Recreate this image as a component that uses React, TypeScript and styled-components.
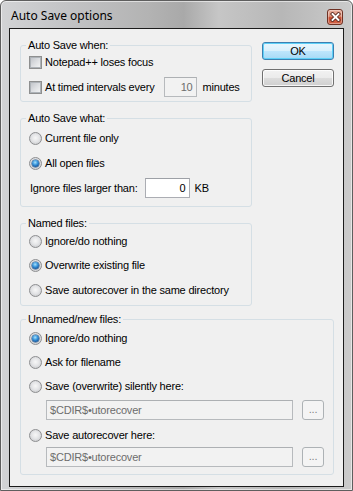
import React from "react";
import styled, { createGlobalStyle } from "styled-components";

const Global = createGlobalStyle`
  html, body { margin: 0; padding: 0; background: #ffffff; }
  body { width: 353px; height: 491px; overflow: hidden; }
  * { box-sizing: border-box; }
`;

const Window = styled.div`
  width: 353px;
  height: 491px;
  display: flex;
  flex-direction: column;
  border: 1px solid #5e5e5e;
  border-radius: 6px 6px 0 0;
  box-shadow: inset 0 0 0 1px rgba(255, 255, 255, 0.55);
  background: linear-gradient(90deg, #d2d3d5 0%, #c3c4c6 18%, #b3b3b3 42%, #a9a9a9 52%, #c6c6c6 62%, #b7b7b7 80%, #cbcbcb 100%);
  padding: 0 8px 3px 8px;
`;

const TitleBar = styled.div`
  height: 27px;
  flex: none;
  display: flex;
  align-items: flex-start;
  justify-content: space-between;
`;

const Title = styled.div`
  font-family: "Noto Sans", "Open Sans", sans-serif;
  font-size: 12px;
  line-height: 16px;
  color: #000000;
  margin: 7px 0 0 2px;
`;

const CloseButton = styled.div`
  width: 16px;
  height: 16px;
  margin: 8px 1px 0 0;
  border: 1px solid #6f3124;
  border-radius: 3px;
  background: linear-gradient(180deg, #eab2a2 0%, #d98c74 45%, #c8482c 55%, #d2664a 100%);
  box-shadow: inset 0 0 0 1px rgba(255, 255, 255, 0.35);
  display: flex;
  align-items: center;
  justify-content: center;
`;

const Client = styled.div`
  flex: 1;
  display: flex;
  flex-direction: column;
  border: 1px solid #1b1b1b;
  background: #f0f0f0;
  padding: 10px 9px 0 10px;
  font-family: "Liberation Sans", Arial, sans-serif;
  font-size: 11px;
  letter-spacing: -0.2px;
  color: #000000;
`;

const TopArea = styled.div`
  display: grid;
  grid-template-columns: 232px 1fr;
  column-gap: 9px;
`;

const GroupColumn = styled.div`
  display: flex;
  flex-direction: column;
  gap: 10px;
`;

const ButtonColumn = styled.div`
  display: flex;
  flex-direction: column;
  align-items: flex-end;
  gap: 9px;
  padding-top: 3px;
`;

const Group = styled.fieldset`
  margin: 0;
  padding: 0;
  min-width: 0;
  border: 1px solid #d5dfe5;
  border-radius: 3px;
`;

const Legend = styled.legend`
  margin-left: 5px;
  padding: 0 2px;
  line-height: 13px;
  font-size: 11px;
`;

const GroupBody = styled.div<{ $bottom: number }>`
  display: flex;
  flex-direction: column;
  padding: 0 8px ${(p) => p.$bottom}px 8px;
`;

const Row = styled.div<{ $mt: number; $indent?: number }>`
  display: flex;
  align-items: center;
  height: 20px;
  margin-top: ${(p) => p.$mt}px;
  margin-left: ${(p) => p.$indent ?? 0}px;
  white-space: nowrap;
`;

const Label = styled.span`
  margin-left: 3px;
  line-height: 13px;
`;

const PlainLabel = styled.span<{ $ml?: number }>`
  margin-left: ${(p) => p.$ml ?? 0}px;
  line-height: 13px;
`;

const CheckBox = styled.span`
  width: 13px;
  height: 13px;
  flex: none;
  border: 1px solid #8e8f8f;
  background: #f4f4f4;
  display: flex;
  align-items: center;
  justify-content: center;
  &::after {
    content: "";
    width: 9px;
    height: 9px;
    border: 1px solid #aeb3b8;
    background: linear-gradient(135deg, #c3c6cb 0%, #dcdee1 50%, #f1f2f3 100%);
  }
`;

const RadioMark = styled.span<{ $checked?: boolean }>`
  width: 13px;
  height: 13px;
  flex: none;
  border-radius: 50%;
  border: 1px solid #8d8e90;
  background: radial-gradient(circle at 50% 45%, #f7f7f7 0%, #e4e5e7 45%, #cdced1 80%, #f2f2f2 100%);
  display: flex;
  align-items: center;
  justify-content: center;
  &::after {
    content: "";
    display: ${(p) => (p.$checked ? "block" : "none")};
    width: 7px;
    height: 7px;
    border-radius: 50%;
    background: radial-gradient(circle at 45% 35%, #a9e2fb 0%, #3b97dc 40%, #1a5fa6 70%, #0f3f7a 100%);
    box-shadow: 0 0 0 0.5px #234f7e;
  }
`;

const TextBox = styled.div<{ $width: number; $disabled?: boolean; $ml?: number; $align?: string }>`
  width: ${(p) => p.$width}px;
  height: 20px;
  margin-left: ${(p) => p.$ml ?? 0}px;
  border: 1px solid ${(p) => (p.$disabled ? "#b7babd" : "#abadb3")};
  border-top-color: ${(p) => (p.$disabled ? "#adb0b3" : "#9da0a6")};
  background: ${(p) => (p.$disabled ? "#f2f2f2" : "#ffffff")};
  color: ${(p) => (p.$disabled ? "#6d6d6d" : "#000000")};
  display: flex;
  align-items: center;
  justify-content: ${(p) => p.$align ?? "flex-start"};
  padding: 0 3px;
  line-height: 13px;
`;

const PushButton = styled.div<{ $default?: boolean }>`
  width: 72px;
  height: 18px;
  border-radius: 3px;
  border: 1px solid ${(p) => (p.$default ? "#3c7fb1" : "#707070")};
  background: ${(p) =>
    p.$default
      ? "linear-gradient(180deg, #eaf6fd 0%, #d9f0fc 50%, #bee6fd 50%, #a7d9f5 100%)"
      : "linear-gradient(180deg, #f2f2f2 0%, #ebebeb 50%, #dddddd 50%, #cfcfcf 100%)"};
  box-shadow: inset 0 0 0 1px ${(p) => (p.$default ? "#5ed0f7" : "rgba(255,255,255,0.8)")};
  display: flex;
  align-items: center;
  justify-content: center;
  line-height: 13px;
`;

const BrowseButton = styled.div`
  width: 22px;
  height: 20px;
  margin-left: 9px;
  border: 1px solid #adb2b5;
  border-radius: 3px;
  background: #f4f4f4;
  color: #838383;
  display: flex;
  align-items: center;
  justify-content: center;
  line-height: 13px;
  padding-bottom: 1px;
`;

const BottomArea = styled.div`
  margin-top: 7px;
`;

const PathText = () => <>$CDIR$•utorecover</>;

export default function App() {
  return (
    <>
      <Global />
      <Window>
        <TitleBar>
          <Title>Auto Save options</Title>
          <CloseButton>
            <svg width="11" height="10" viewBox="0 0 11 10">
              <path d="M2.5 2 L8.5 8 M8.5 2 L2.5 8" stroke="#5a2a20" strokeWidth="3.6" strokeLinecap="square" />
              <path d="M2.5 2 L8.5 8 M8.5 2 L2.5 8" stroke="#ffffff" strokeWidth="1.9" strokeLinecap="square" />
            </svg>
          </CloseButton>
        </TitleBar>
        <Client>
          <TopArea>
            <GroupColumn>
              <Group>
                <Legend>Auto Save when:</Legend>
                <GroupBody $bottom={4}>
                  <Row $mt={0}>
                    <CheckBox />
                    <Label>Notepad++ loses focus</Label>
                  </Row>
                  <Row $mt={5}>
                    <CheckBox />
                    <Label>At timed intervals every</Label>
                    <TextBox $width={33} $disabled $ml={9} $align="flex-end">10</TextBox>
                    <PlainLabel $ml={6}>minutes</PlainLabel>
                  </Row>
                </GroupBody>
              </Group>
              <Group>
                <Legend>Auto Save what:</Legend>
                <GroupBody $bottom={8}>
                  <Row $mt={3}>
                    <RadioMark />
                    <Label>Current file only</Label>
                  </Row>
                  <Row $mt={5}>
                    <RadioMark $checked />
                    <Label>All open files</Label>
                  </Row>
                  <Row $mt={5}>
                    <PlainLabel $ml={1}>Ignore files larger than:</PlainLabel>
                    <TextBox $width={45} $ml={7} $align="flex-end">0</TextBox>
                    <PlainLabel $ml={5}>KB</PlainLabel>
                  </Row>
                </GroupBody>
              </Group>
              <Group>
                <Legend>Named files:</Legend>
                <GroupBody $bottom={5}>
                  <Row $mt={1}>
                    <RadioMark />
                    <Label>Ignore/do nothing</Label>
                  </Row>
                  <Row $mt={4}>
                    <RadioMark $checked />
                    <Label>Overwrite existing file</Label>
                  </Row>
                  <Row $mt={5}>
                    <RadioMark />
                    <Label>Save autorecover in the same directory</Label>
                  </Row>
                </GroupBody>
              </Group>
            </GroupColumn>
            <ButtonColumn>
              <PushButton $default>OK</PushButton>
              <PushButton>Cancel</PushButton>
            </ButtonColumn>
          </TopArea>
          <BottomArea>
            <Group>
              <Legend>Unnamed/new files:</Legend>
              <GroupBody $bottom={7}>
                <Row $mt={2}>
                  <RadioMark $checked />
                  <Label>Ignore/do nothing</Label>
                </Row>
                <Row $mt={4}>
                  <RadioMark />
                  <Label>Ask for filename</Label>
                </Row>
                <Row $mt={4}>
                  <RadioMark />
                  <Label>Save (overwrite) silently here:</Label>
                </Row>
                <Row $mt={4} $indent={17}>
                  <TextBox $width={247} $disabled>
                    <PathText />
                  </TextBox>
                  <BrowseButton>...</BrowseButton>
                </Row>
                <Row $mt={5}>
                  <RadioMark />
                  <Label>Save autorecover here:</Label>
                </Row>
                <Row $mt={2} $indent={17}>
                  <TextBox $width={247} $disabled>
                    <PathText />
                  </TextBox>
                  <BrowseButton>...</BrowseButton>
                </Row>
              </GroupBody>
            </Group>
          </BottomArea>
        </Client>
      </Window>
    </>
  );
}
